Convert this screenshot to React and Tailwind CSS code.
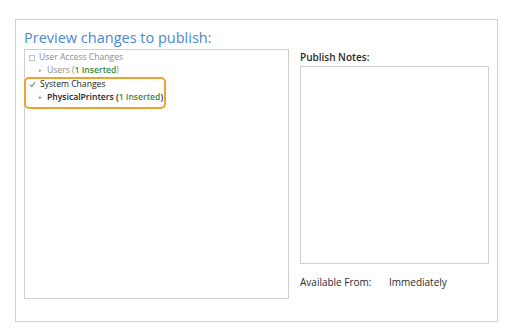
export default function App() {
  return (
    <div className="w-[511px] h-[331px] bg-white pt-[19px] pl-[15px]" style={{ fontFamily: '"Open Sans", sans-serif' }}>
      <div className="w-[483px] h-[303px] border border-[#cfcfcf] pl-[8px] pt-[8px] flex flex-col">
        {/* Title */}
        <div className="h-[21px] text-[14.5px] leading-[20px] text-[#4a88d6]">
          Preview changes to publish:
        </div>

        <div className="flex items-start">
          {/* Change tree */}
          <div className="w-[265px] h-[250px] border border-[#cfcfcf] text-[8.6px] whitespace-nowrap">
            <div className="pt-[1px] pl-[3px] text-[#8c8c8c]">
              <div className="flex items-center h-[13px]">
                <span className="w-[6px] h-[6px] border border-[#c4c4c4] mr-[4px] ml-[1px]" />
                <span>User Access Changes</span>
              </div>
              <div className="flex items-center h-[13px] pl-[11px]">
                <span className="text-[5px] mr-[5px]">▸</span>
                <span>
                  Users (<span className="text-[#3a8a3a] font-semibold">1 Inserted</span>)
                </span>
              </div>
            </div>
            <div className="w-[142px] h-[32px] -ml-px border-2 border-[#efa22c] rounded-[5px] pl-[2px] text-[#222]">
              <div className="flex items-center h-[10px]">
                <span className="w-[7px] h-[7px] mr-[4px] ml-[1px] flex items-center justify-center">
                  <svg viewBox="0 0 8 8" className="w-[7px] h-[7px]">
                    <path d="M1 4.2 L3.2 6.2 L7 1.6" stroke="#5aa05a" strokeWidth="1.3" fill="none" />
                  </svg>
                </span>
                <span>System Changes</span>
              </div>
              <div className="flex items-center h-[13px] mt-[2px] pl-[11px] font-semibold">
                <span className="text-[5px] mr-[5px] text-[#8c8c8c]">▸</span>
                <span>
                  PhysicalPrinters (<span className="text-[#3a8a3a]">1 Inserted</span>)
                </span>
              </div>
            </div>
          </div>

          {/* Notes */}
          <div className="ml-[11px] mt-[1px] flex flex-col text-[10px] text-[#2a2a2a] whitespace-nowrap">
            <div className="h-[14px] leading-[14px] font-semibold">Publish Notes:</div>
            <div className="mt-[2px] w-[189px] h-[198px] border border-[#cfcfcf]" />
            <div className="mt-[11px] flex leading-[14px]">
              <span className="w-[89px]">Available From:</span>
              <span>Immediately</span>
            </div>
          </div>
        </div>
      </div>
    </div>
  );
}
